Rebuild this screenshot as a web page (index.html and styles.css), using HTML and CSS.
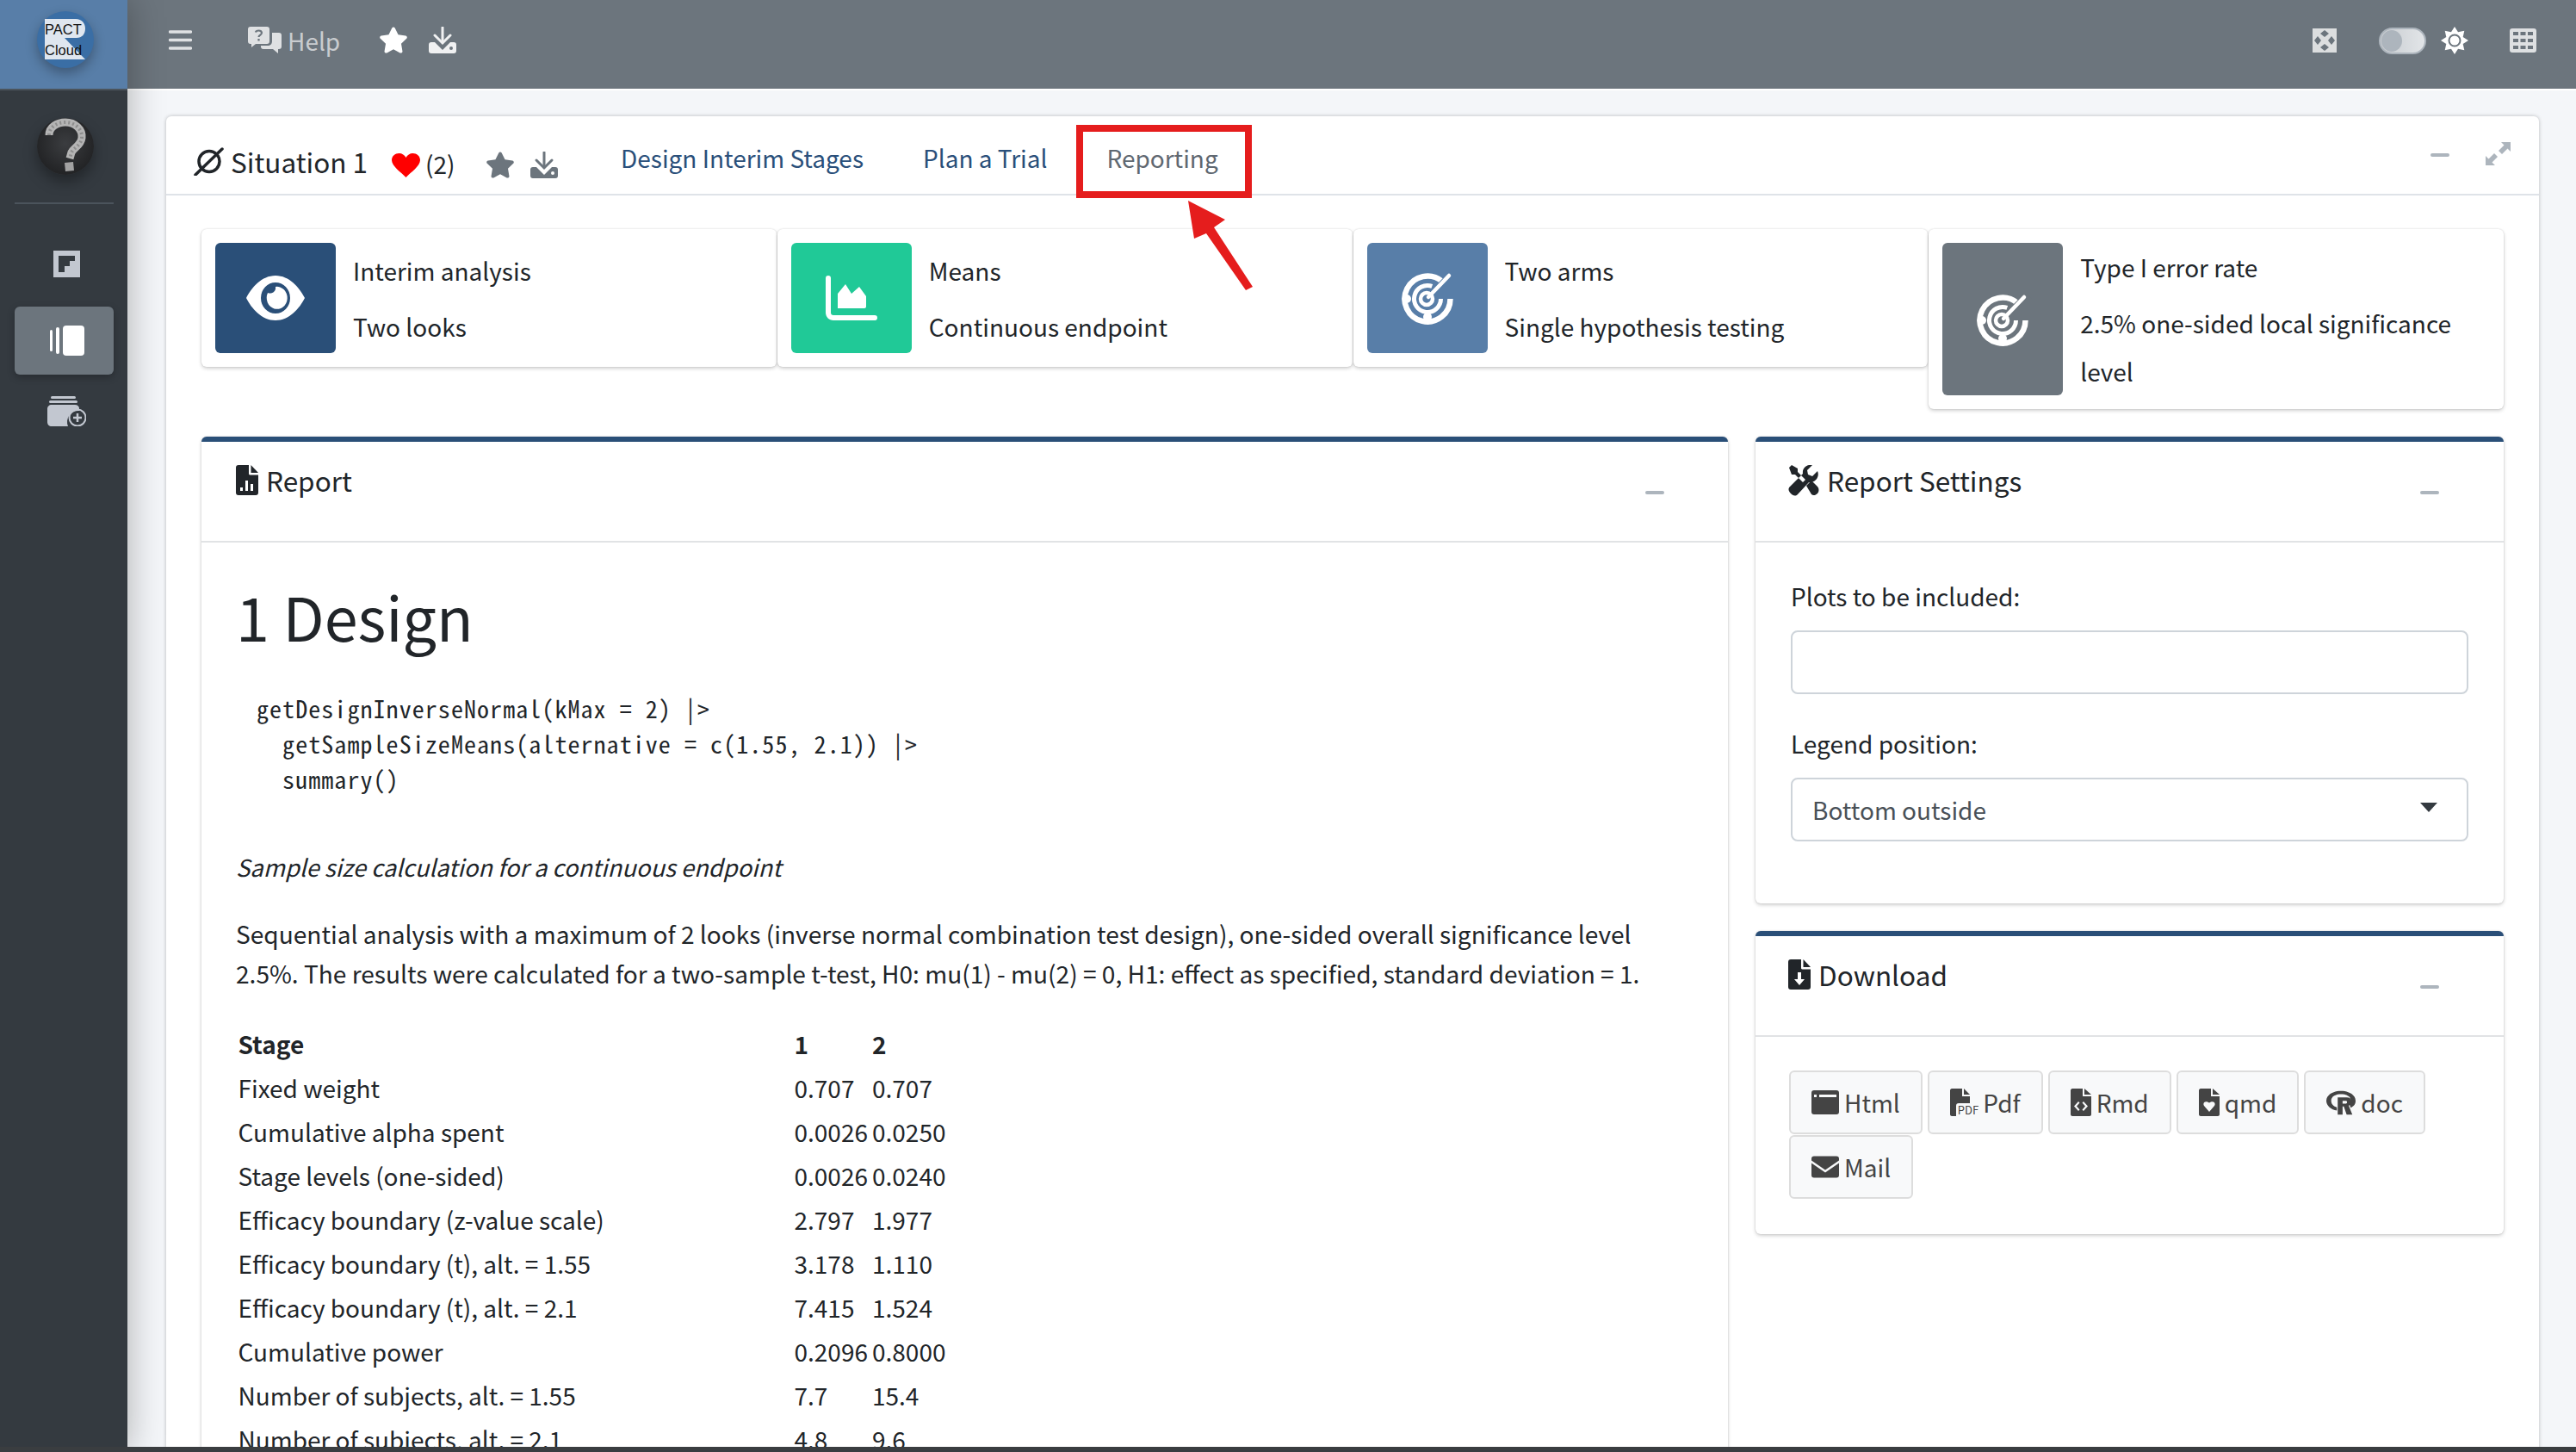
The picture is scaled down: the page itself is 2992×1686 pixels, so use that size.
FILE: index.html
```html
<!DOCTYPE html>
<html lang="en">
<head>
<meta charset="utf-8">
<title>PACT Cloud - Reporting</title>
<link rel="stylesheet" href="styles.css">
</head>
<body>
<div class="app">
  <aside class="sidebar">
    <div class="brand">
      <div class="logo">
        <svg class="logo-r" viewBox="0 0 47 47"><path d="M0 0H36C43 0 47 5 47 11C47 18 43 22 37 22H23L47 47H0Z"/></svg>
        <span class="logo-a">PACT</span>
        <span class="logo-b">Cloud</span>
      </div>
    </div>
    <div class="user">
      <span class="q-ball">
        <svg class="q-mark" viewBox="0 0 66 66"><path class="q-chalk" d="M14 20C14 10 24 5 33 5C44 5 53 13 52 23C51 32 43 34 40 40L38 47"/><path class="q-grain" d="M14 20C14 10 24 5 33 5C44 5 53 13 52 23C51 32 43 34 40 40L38 47"/><path class="q-dot" d="M32 52L42 51 43 61 33 62Z"/></svg>
      </span>
    </div>
    <div class="side-rule"></div>
    <nav class="side-nav">
      <div class="side-item">
        <svg class="ico-flip" viewBox="0 0 31 31"><path d="M0 0H31V31H0ZM6 6V25H13V18H19V12H25V6Z"/></svg>
      </div>
      <div class="side-item active">
        <svg class="ico-pages" viewBox="0 0 40 35"><rect x="0" y="5" width="3" height="25" rx="1.5"/><rect x="7" y="2" width="4" height="31" rx="2"/><rect x="15" y="0" width="25" height="35" rx="4"/></svg>
      </div>
      <div class="side-item">
        <svg class="ico-add" viewBox="0 0 45 35"><rect x="4" y="0" width="29" height="3" rx="1.5"/><rect x="2" y="5" width="33" height="3" rx="1.5"/><path d="M5 10H32C35 10 37 12 37 14V17A13 13 0 0 0 24 35H5C2 35 0 33 0 30V15C0 12 2 10 5 10Z"/><circle cx="35" cy="25" r="9.5" fill="none" stroke="currentColor" stroke-width="2"/><path d="M35 20V30M30 25H40" fill="none" stroke="currentColor" stroke-width="2.5"/></svg>
      </div>
    </nav>
  </aside>

  <div class="main">
    <header class="topbar">
      <div class="top-left">
        <svg class="ico-burger" viewBox="0 0 27 23"><path d="M1.5 2H25.5M1.5 11.5H25.5M1.5 21H25.5" fill="none" stroke="currentColor" stroke-width="3.5" stroke-linecap="round"/></svg>
        <span class="help">
          <svg class="ico-help" viewBox="0 0 39 31"><path d="M3 0H22C24 0 25 1 25 3V17C25 19 24 20 22 20H9L4 24V20H3C1 20 0 19 0 17V3C0 1 1 0 3 0Z"/><path d="M28 7H36C38 7 39 8 39 10V23C39 25 38 26 36 26H35V31L29 26H18C16 26 15 25 15 23V22H23C26 22 28 20 28 17Z"/><path class="ico-help-q" d="M9 6.5C9.5 4 15.5 3.5 16 7C16.300 9.500 12.500 9.500 12.500 12M12.500 14V16.500" fill="none" stroke-width="2.200"/></svg>
          Help
        </span>
        <svg class="ico-top-star" viewBox="0 0 576 512"><path d="M259.3 17.8L194 150.2 47.9 171.5c-26.2 3.8-36.700 36.100-17.700 54.600l105.700 103-25 145.500c-4.500 26.300 23.200 46 46.400 33.700L288 439.600l130.700 68.700c23.200 12.200 50.900-7.400 46.400-33.700l-25-145.500 105.700-103c19-18.500 8.500-50.800-17.700-54.600L382 150.200 316.700 17.800c-11.700-23.600-45.600-23.900-57.400 0z"/></svg>
        <svg class="ico-top-dl" viewBox="0 0 32 31"><use href="#dl"/></svg>
      </div>
      <div class="top-right">
        <svg class="ico-arrows" viewBox="0 0 28 28"><path fill-rule="evenodd" d="M0 0H28V28H0ZM14 2L19 6 14 10 9 6ZM26 14L22 19 18 14 22 9ZM14 26L9 22 14 18 19 22ZM2 14L6 9 10 14 6 19Z"/></svg>
        <span class="toggle"><span class="toggle-knob"></span></span>
        <svg class="ico-sun" viewBox="0 0 32 32"><path fill-rule="evenodd" d="M16 0L20 6.300 27.300 4.700 25.700 12 32 16 25.700 20 27.300 27.300 20 25.700 16 32 12 25.700 4.700 27.300 6.300 20 0 16 6.300 12 4.700 4.700 12 6.300ZM16 8.500A7.500 7.500 0 1 0 16 23.500 7.500 7.500 0 1 0 16 8.500Z"/><circle cx="16" cy="16" r="5.500"/></svg>
        <svg class="ico-grid" viewBox="0 0 31 28"><path fill-rule="evenodd" d="M3 0H28C30 0 31 1 31 3V25C31 27 30 28 28 28H3C1 28 0 27 0 25V3C0 1 1 0 3 0ZM4 4V8H10V4ZM12.500 4V8H18.500V4ZM21 4V8H27V4ZM4 12V16H10V12ZM12.500 12V16H18.500V12ZM21 12V16H27V12ZM4 20V24H10V20ZM12.500 20V24H18.500V20ZM21 20V24H27V20Z"/></svg>
      </div>
    </header>

    <main class="content">
      <section class="situation">
        <div class="sit-head">
          <div class="sit-title">
            <svg class="ico-null" viewBox="0 0 35 33"><circle cx="18" cy="16.500" r="12" fill="none" stroke="currentColor" stroke-width="3.500"/><path d="M2 32L33 2" stroke="currentColor" stroke-width="3.500" stroke-linecap="round"/></svg>
            <span class="sit-name">Situation 1</span>
            <svg class="ico-heart" viewBox="0 0 33 28"><path d="M16.500 28C11 22 0 15 0 8C0 3 4 0 8.500 0C12 0 15 2 16.500 5C18 2 21 0 24.500 0C29 0 33 3 33 8C33 15 22 22 16.500 28Z"/></svg>
            <span class="sit-count">(2)</span>
            <svg class="ico-sit-star" viewBox="0 0 576 512"><path d="M259.3 17.8L194 150.2 47.9 171.5c-26.2 3.8-36.700 36.100-17.700 54.600l105.700 103-25 145.500c-4.500 26.300 23.200 46 46.400 33.700L288 439.600l130.700 68.700c23.200 12.200 50.900-7.400 46.400-33.700l-25-145.500 105.700-103c19-18.500 8.500-50.800-17.700-54.600L382 150.200 316.700 17.800c-11.700-23.600-45.600-23.900-57.400 0z"/></svg>
            <svg class="ico-sit-dl" viewBox="0 0 32 31"><use href="#dl"/></svg>
          </div>
          <ul class="tabs">
            <li class="tab">Design Interim Stages</li>
            <li class="tab">Plan a Trial</li>
            <li class="tab tab-active">Reporting</li>
          </ul>
          <div class="sit-tools">
            <span class="minus"></span>
            <svg class="ico-expand" viewBox="0 0 29 27"><path d="M18 0H29V11L25.500 7.500 19 14 15 10 21.500 3.500ZM0 27V16L3.500 19.500 10 13 14 17 7.500 23.500 11 27Z"/></svg>
          </div>
        </div>

        <div class="sit-body">
          <div class="info-row">
            <div class="info-box">
              <div class="info-icon navy">
                <svg class="ico-eye" viewBox="0 0 68 52"><path fill-rule="evenodd" d="M34 0C50 0 62 14 68 26C62 38 50 52 34 52C18 52 6 38 0 26C6 14 18 0 34 0ZM34 8A17 18 0 1 0 34 44 17 18 0 1 0 34 8Z"/><path d="M34 13A12 13 0 1 1 25 20C29 22 35 19 34 13Z"/></svg>
              </div>
              <div class="info-text"><span>Interim analysis</span><span>Two looks</span></div>
            </div>
            <div class="info-box">
              <div class="info-icon green">
                <svg class="ico-chart" viewBox="0 0 60 52"><path d="M0 3C0 1 1 0 3 0S6 1 6 3V43C6 45 7 46 9 46H57C59 46 60 47 60 49S59 52 57 52H9C4 52 0 48 0 43Z"/><path d="M14 38V21L23 10 30 21 39 13 47 24V36C47 37 46 38 45 38Z"/></svg>
              </div>
              <div class="info-text"><span>Means</span><span>Continuous endpoint</span></div>
            </div>
            <div class="info-box">
              <div class="info-icon steel">
                <svg class="ico-target" viewBox="0 0 60 60"><path class="w" d="M56.500 31A26.500 26.500 0 1 1 47 10.700"/><path class="w thin" d="M45.500 31A15.500 15.500 0 1 1 35.300 16.400"/><circle class="d" cx="6" cy="31" r="5"/><circle class="d" cx="30" cy="52" r="5"/><path class="cut" d="M32 30L60 2"/><circle class="w core" cx="29" cy="31" r="7"/><path class="w line" d="M31 29L55 4"/></svg>
              </div>
              <div class="info-text"><span>Two arms</span><span>Single hypothesis testing</span></div>
            </div>
            <div class="info-box">
              <div class="info-icon slate">
                <svg class="ico-target" viewBox="0 0 60 60"><path class="w" d="M56.500 31A26.500 26.500 0 1 1 47 10.700"/><path class="w thin" d="M45.500 31A15.500 15.500 0 1 1 35.300 16.400"/><circle class="d" cx="6" cy="31" r="5"/><circle class="d" cx="30" cy="52" r="5"/><path class="cut" d="M32 30L60 2"/><circle class="w core" cx="29" cy="31" r="7"/><path class="w line" d="M31 29L55 4"/></svg>
              </div>
              <div class="info-text"><span>Type I error rate</span><span>2.5% one-sided local significance level</span></div>
            </div>
          </div>

          <div class="columns">
            <article class="panel report">
              <div class="panel-head">
                <div class="panel-title">
                  <svg class="ico-file" viewBox="0 0 26 35"><path fill-rule="evenodd" d="M3 0H15V10C15 11 16 11.500 17 11.500H26V32C26 34 25 35 23 35H3C1 35 0 34 0 32V3C0 1 1 0 3 0ZM5 26V30H8V26ZM11 18V30H14V18ZM17 22V30H20V22Z"/><path d="M17.500 0L26 9H17.500Z"/></svg>
                  Report
                </div>
                <span class="minus"></span>
              </div>
              <div class="report-body">
                <h1 class="doc-h1">1 Design</h1>
                <pre class="doc-code">getDesignInverseNormal(kMax = 2) |&gt;
  getSampleSizeMeans(alternative = c(1.55, 2.1)) |&gt;
  summary()</pre>
                <p class="doc-em">Sample size calculation for a continuous endpoint</p>
                <p class="doc-p">Sequential analysis with a maximum of 2 looks (inverse normal combination test design), one-sided overall significance level 2.5%. The results were calculated for a two-sample t-test, H0: mu(1) - mu(2) = 0, H1: effect as specified, standard deviation = 1.</p>
                <table class="doc-table">
                  <thead><tr><th class="col-label">Stage</th><th>1</th><th>2</th></tr></thead>
                  <tbody>
                    <tr><td>Fixed weight</td><td>0.707</td><td>0.707</td></tr>
                    <tr><td>Cumulative alpha spent</td><td>0.0026</td><td>0.0250</td></tr>
                    <tr><td>Stage levels (one-sided)</td><td>0.0026</td><td>0.0240</td></tr>
                    <tr><td>Efficacy boundary (z-value scale)</td><td>2.797</td><td>1.977</td></tr>
                    <tr><td>Efficacy boundary (t), alt. = 1.55</td><td>3.178</td><td>1.110</td></tr>
                    <tr><td>Efficacy boundary (t), alt. = 2.1</td><td>7.415</td><td>1.524</td></tr>
                    <tr><td>Cumulative power</td><td>0.2096</td><td>0.8000</td></tr>
                    <tr><td>Number of subjects, alt. = 1.55</td><td>7.7</td><td>15.4</td></tr>
                    <tr><td>Number of subjects, alt. = 2.1</td><td>4.8</td><td>9.6</td></tr>
                  </tbody>
                </table>
              </div>
            </article>

            <div class="side-col">
              <article class="panel">
                <div class="panel-head">
                  <div class="panel-title">
                    <svg class="ico-tools" viewBox="0 0 36 36"><path d="M1 3L4 0 11 4V8L20 17 17 20 8 11H4ZM34 7L28 13 23 11 22 6 28 0C22 -1 16 3 17 10L2 25C-1 28 1 31 3 33S8 37 11 34L24 20C31 21 37 14 34 7Z"/><path d="M21 24L27 18 34 25C36 27 36 31 34 33S29 36 27 34Z"/></svg>
                    Report Settings
                  </div>
                  <span class="minus"></span>
                </div>
                <div class="settings-body">
                  <label class="field-label">Plots to be included:</label>
                  <div class="field-box"></div>
                  <label class="field-label second">Legend position:</label>
                  <div class="field-box select"><span>Bottom outside</span><i class="caret"></i></div>
                </div>
              </article>
              <article class="panel">
                <div class="panel-head">
                  <div class="panel-title">
                    <svg class="ico-file" viewBox="0 0 26 35"><path fill-rule="evenodd" d="M3 0H15V10C15 11 16 11.500 17 11.500H26V32C26 34 25 35 23 35H3C1 35 0 34 0 32V3C0 1 1 0 3 0ZM11 15V23H7L13 30 19 23H15V15Z"/><path d="M17.500 0L26 9H17.500Z"/></svg>
                    Download
                  </div>
                  <span class="minus"></span>
                </div>
                <div class="dl-body">
                  <button class="btn"><svg class="bi bi-html" viewBox="0 0 32 28"><path fill-rule="evenodd" d="M3 0H29C31 0 32 1 32 3V25C32 27 31 28 29 28H3C1 28 0 27 0 25V3C0 1 1 0 3 0ZM3 5V8H6V5ZM9 5V8H29V5Z"/></svg>Html</button>
                  <button class="btn"><svg class="bi bi-pdf" viewBox="0 0 23 32"><path d="M2 0H14V9H23V17H10C8 17 7 18 7 20V32H2C1 32 0 31 0 30V2C0 1 1 0 2 0ZM16 0L23 7H16Z"/></svg><em class="pdf-tag">PDF</em>Pdf</button>
                  <button class="btn"><svg class="bi bi-file" viewBox="0 0 24 32"><path fill-rule="evenodd" d="M2 0H14V9H24V30C24 31 23 32 22 32H2C1 32 0 31 0 30V2C0 1 1 0 2 0ZM9 15L4 20.500 9 26 10.500 24.500 7 20.500 10.500 16.500ZM15 15L13.500 16.500 17 20.500 13.500 24.500 15 26 20 20.500Z"/><path d="M16 0L24 7H16Z"/></svg>Rmd</button>
                  <button class="btn"><svg class="bi bi-file" viewBox="0 0 24 32"><path fill-rule="evenodd" d="M2 0H14V9H24V30C24 31 23 32 22 32H2C1 32 0 31 0 30V2C0 1 1 0 2 0ZM12 27L18 20C20 17 17 13 12 16.500 7 13 4 17 6 20Z"/><path d="M16 0L24 7H16Z"/></svg>qmd</button>
                  <button class="btn"><svg class="bi bi-r" viewBox="0 0 36 29"><path fill-rule="evenodd" d="M18 0C28 0 36 5 36 12C36 17 33 19 30 20.500L28 15C29 14 30 13 30 11C30 7 25 4 18 4C11 4 6 7 6 12C6 16 9 19 13 20V24C6 23 0 18 0 12C0 5 8 0 18 0Z"/><path fill-rule="evenodd" d="M14 8H25C29 8 31 10 31 13C31 16 29 17.500 27.500 18L32 29H25L21.500 19H20V29H14ZM20 12V15.500H24C25 15.500 25.500 15 25.500 13.700 25.500 12.500 25 12 24 12Z"/></svg>doc</button>
                  <button class="btn"><svg class="bi bi-html" viewBox="0 0 32 25"><path d="M3 0H29C31 0 32 1 32 3V5L16 16 0 5V3C0 1 1 0 3 0ZM0 8L16 19 32 8V22C32 24 31 25 29 25H3C1 25 0 24 0 22Z"/></svg>Mail</button>
                </div>
              </article>
            </div>
          </div>
        </div>
      </section>
    </main>
  </div>

  <svg class="annotation" viewBox="0 0 230 200">
    <rect x="14" y="9" width="196" height="77" fill="none" stroke="#e51d1d" stroke-width="8"/>
    <path d="M140 93L183 115 170 124 215 193 207 197 161 131 147 137Z" fill="#e51d1d"/>
  </svg>
  <div class="bottom-bar"></div>

  <svg class="defs" width="0" height="0"><defs>
    <g id="dl"><path d="M16 1V17" fill="none" stroke="currentColor" stroke-width="3" stroke-linecap="round"/><path d="M7 10L16 19 25 10" fill="none" stroke="currentColor" stroke-width="3" stroke-linecap="round"/><path fill="currentColor" fill-rule="evenodd" d="M3 18H7L16 27 25 18H29C31 18 32 19 32 21V28C32 30 31 31 29 31H3C1 31 0 30 0 28V21C0 19 1 18 3 18ZM26 23A2 2 0 1 0 26 27 2 2 0 1 0 26 23Z"/></g>
  </defs></svg>
</div>
</body>
</html>
```
FILE: styles.css
```css
* { box-sizing: border-box; }
html, body { margin: 0; padding: 0; width: 2992px; height: 1686px; overflow: hidden; }
body {
  font-family: "Noto Sans CJK SC", "Noto Sans", sans-serif;
  font-size: 28px;
  line-height: 48px;
  color: #212529;
  background: #f4f6f9;
}
.app { position: relative; display: flex; width: 2992px; height: 1686px; overflow: hidden; }
.defs { position: absolute; }

/* sidebar */
.sidebar { width: 148px; flex: none; background: #343a40; position: relative; z-index: 2; box-shadow: 0 0 40px rgba(0,0,0,.3); display: flex; flex-direction: column; }
.brand { height: 105px; background: #587ea8; border-bottom: 2px solid #4b545c; display: flex; align-items: center; justify-content: center; padding: 0 0 12px 4px; }
.logo { position: relative; width: 66px; height: 66px; border-radius: 50%; background: #3a6ea5; box-shadow: 0 6px 14px rgba(0,0,0,.3); }
.logo-r { position: absolute; left: 9px; top: 9px; width: 47px; height: 47px; fill: #dfe6ef; }
.logo-a, .logo-b { position: absolute; font-family: "Liberation Sans", sans-serif; color: #111; white-space: nowrap; line-height: 22px; font-size: 16.500px; }
.logo-a { left: 9px; top: 10px; }
.logo-b { left: 9px; top: 34px; }
.user { display: flex; justify-content: center; padding: 32px 0 0 4px; }
.q-ball { width: 66px; height: 66px; border-radius: 50%; background: radial-gradient(circle at 50% 45%, #3b3d40, #232426 70%, #2b2d30); box-shadow: 0 8px 16px rgba(0,0,0,.35); display: block; }
.q-mark { display: block; width: 66px; height: 66px; fill: none; }
.q-chalk { stroke: #b4b4b4; stroke-width: 9; }
.q-grain { stroke: #8d8d8d; stroke-width: 4; stroke-dasharray: 2 3; }
.q-dot { fill: #a2a2a2; }
.side-rule { height: 2px; margin: 32px 16px 0 17px; background: #4b545c; }
.side-nav { display: flex; flex-direction: column; align-items: stretch; padding: 54px 16px 0 17px; }
.side-item { display: flex; align-items: center; justify-content: center; color: #c2c7d0; height: 79px; border-radius: 6px; padding-left: 6px; }
.side-item:first-child { height: 31px; margin-bottom: 34px; }
.side-item.active { background: #6c757d; color: #fff; box-shadow: 0 3px 8px rgba(0,0,0,.25); }
.side-item:last-child { height: 35px; margin-top: 25px; }
.side-item svg { fill: currentColor; display: block; }
.ico-flip { width: 31px; height: 31px; }
.ico-pages { width: 40px; height: 35px; }
.ico-add { width: 45px; height: 35px; }

/* topbar */
.main { flex: 1; min-width: 0; display: flex; flex-direction: column; }
.topbar { height: 105px; flex: none; background: #6c757d; border-bottom: 2px solid #fff; display: flex; justify-content: space-between; padding: 0 46px 0 48px; }
.top-left, .top-right { display: flex; align-items: flex-start; }
.top-left svg, .top-right svg { display: block; fill: currentColor; }
.ico-burger { width: 27px; height: 23px; margin-top: 35px; color: #dfe1e3; }
.help { display: flex; align-items: flex-start; margin-left: 65px; color: #c9cccf; line-height: 48px; padding-top: 23px; gap: 7px; width: 145px; }
.ico-help { width: 39px; height: 31px; margin-top: 8px; fill: #dfe1e3 !important; flex: none; }
.ico-help-q { stroke: #6c757d; }
.ico-top-star { width: 34px; height: 31px; margin-top: 31px; margin-left: 7px; color: #fff; }
.ico-top-dl { width: 32px; height: 31px; margin-top: 31px; margin-left: 24px; color: #f0f1f2; }
.ico-arrows { width: 28px; height: 28px; margin-top: 33px; color: #dcdedf; }
.toggle { width: 55px; height: 31px; margin: 32px 0 0 49px; border-radius: 16px; background: linear-gradient(90deg, #c8ccd0, #e2e5e8); border: 2px solid #adb5bd; position: relative; display: block; }
.toggle-knob { position: absolute; left: 1px; top: 1px; width: 24px; height: 25px; border-radius: 50%; background: #adb5bd; }
.ico-sun { width: 32px; height: 32px; margin: 31px 0 0 17px; color: #fff; }
.ico-grid { width: 31px; height: 28px; margin: 33px 0 0 48px; color: #dee0e2; }

/* situation card */
.content { flex: 1; min-height: 0; padding: 30px 43px 0 45px; overflow: hidden; }
.situation { background: #fff; border-radius: 6px 6px 0 0; box-shadow: 0 0 4px rgba(0,0,0,.25); }
.sit-head { height: 92px; border-bottom: 2px solid #dfe3e8; display: flex; align-items: flex-start; padding-left: 32px; }
.sit-title { display: flex; align-items: flex-start; width: 462px; flex: none; padding-top: 28px; }
.sit-title svg { display: block; flex: none; }
.ico-null { width: 35px; height: 33px; margin-top: 8px; color: #212529; }
.sit-name { margin-left: 8px; font-size: 31.500px; white-space: nowrap; }
.ico-heart { width: 33px; height: 28px; margin: 15px 0 0 28px; fill: #f00; }
.sit-count { margin-left: 6px; padding-top: 3px; }
.ico-sit-star { width: 34px; height: 31px; margin: 13px 0 0 35px; fill: #6c757d; }
.ico-sit-dl { width: 32px; height: 31px; margin: 13px 0 0 18px; color: #6c757d; }
.tabs { list-style: none; display: flex; margin: 0; padding: 24px 0 0 0; }
.tab { padding: 0 34.500px; color: #2a4f7a; white-space: nowrap; }
.tab:first-child { padding-left: 34px; }
.tab-active { color: #5f6871; }
.sit-tools { margin-left: auto; display: flex; align-items: flex-start; padding: 30px 33px 0 0; }
.sit-tools .minus { margin: 13px 0 0 0; }
.ico-expand { width: 29px; height: 27px; margin-left: 42px; fill: #adb5bd; }
.minus { display: block; width: 22px; height: 4px; border-radius: 2px; background: #adb5bd; flex: none; }

.sit-body { padding: 39px 41px 0; }
.info-row { display: grid; grid-template-columns: repeat(4, 1fr); gap: 1px; align-items: start; height: 209px; }
.info-box { display: flex; background: #fff; border-radius: 6px; padding: 16px; gap: 20px; min-height: 160px; box-shadow: 0 0 2px rgba(0,0,0,.15), 0 2px 4px rgba(0,0,0,.18); }
.info-icon { width: 140px; flex: none; align-self: stretch; border-radius: 6px; display: flex; align-items: center; justify-content: center; }
.info-icon.navy { background: #2a4f78; }
.info-icon.green { background: #20c997; }
.info-icon.steel { background: #587ea8; }
.info-icon.slate { background: #6c757d; }
.info-icon svg { display: block; fill: #fff; }
.ico-eye { width: 68px; height: 52px; }
.ico-chart { width: 60px; height: 52px; }
.ico-target { width: 60px; height: 60px; overflow: visible; }
.ico-target .w { stroke: #fff; stroke-width: 6.500; fill: none; }
.ico-target .thin { stroke-width: 5; }
.ico-target .core { stroke-width: 4.500; }
.ico-target .line { stroke-width: 4.500; stroke-linecap: round; }
.ico-target .d { fill: #fff; }
.ico-target .cut { stroke-width: 10; fill: none; }
.steel .cut { stroke: #587ea8; }
.slate .cut { stroke: #6c757d; }
.info-text { display: flex; flex-direction: column; justify-content: center; gap: 9px; line-height: 56px; min-width: 0; }
.info-text span { display: block; }

/* panels */
.columns { display: grid; grid-template-columns: 1773px 869px; column-gap: 32px; margin-top: 32px; align-items: start; }
.side-col { display: flex; flex-direction: column; gap: 32px; }
.panel { background: #fff; border-top: 6px solid #2a4f78; border-radius: 6px; box-shadow: 0 0 2px rgba(0,0,0,.15), 0 2px 4px rgba(0,0,0,.18); }
.panel-head { height: 117px; border-bottom: 2px solid #e1e3e5; display: flex; justify-content: space-between; padding: 20px 74px 0 40px; }
.side-col .panel-head { padding-left: 38px; padding-right: 75px; }
.panel-title { display: flex; align-items: flex-start; font-size: 31.500px; white-space: nowrap; }
.panel-title svg { display: block; flex: none; margin-right: 9px; fill: #212529; }
.panel-head .minus { margin-top: 37px; }
.ico-file { width: 26px; height: 35px; margin-top: 7px; }
.ico-tools { width: 36px; height: 36px; margin-top: 7px; }

.report-body { padding: 37px 40px 0; height: 1100px; }
.doc-h1 { margin: 0; font-size: 70px; line-height: 96px; font-weight: 400; }
.doc-code { margin: 39px 0 0; padding-left: 24px; font-family: "Noto Sans Mono CJK SC", "Liberation Mono", monospace; font-size: 28px; letter-spacing: 1.060px; line-height: 41px; color: #212529; }
.doc-em { margin: 57px 0 0; font-style: italic; font-size: 27.300px; }
.doc-p { margin: 31px 0 0; font-size: 28.080px; line-height: 46px; max-width: 1660px; }
.doc-table { margin-top: 33px; border-collapse: collapse; }
.doc-table th, .doc-table td { padding: 0 2.500px; height: 51px; text-align: left; white-space: nowrap; line-height: 48px; }
.doc-table th { font-weight: 700; }
.col-label { width: 646px; }

.settings-body { padding: 38px 41px 72px; }
.field-label { display: block; margin-bottom: 16px; }
.field-label.second { margin-top: 33px; }
.field-box { height: 74px; border: 2px solid #ced4da; border-radius: 8px; background: #fff; }
.select { display: flex; align-items: center; justify-content: space-between; padding: 0 34px 0 23px; color: #495057; }
.caret { display: block; width: 0; height: 0; border-left: 10px solid transparent; border-right: 10px solid transparent; border-top: 11px solid #343a40; margin-top: -6px; }

.dl-body { display: flex; flex-wrap: wrap; gap: 1px 6px; padding: 39px 41px 41px 39px; }
.btn { display: flex; align-items: center; height: 74px; padding: 0 24px; border: 2px solid #ddd; border-radius: 6px; background: #f8f9fa; color: #444; font: inherit; line-height: 48px; }
.bi { display: block; fill: #444; margin-right: 6px; flex: none; }
.bi-html { width: 32px; height: 28px; }
.bi-pdf { width: 23px; height: 32px; margin-right: 0; }
.pdf-tag { font-style: normal; font-size: 13px; line-height: 14px; color: #444; margin: 18px 5px 0 -14px; }
.bi-file { width: 24px; height: 32px; }
.bi-r { width: 34px; height: 29px; }

/* annotation drawn on top of the screenshot */
.annotation { position: absolute; left: 1240px; top: 140px; width: 230px; height: 200px; z-index: 3; }
.bottom-bar { position: absolute; left: 0; right: 0; bottom: 0; height: 6px; background: #3a3d40; z-index: 4; }
```
